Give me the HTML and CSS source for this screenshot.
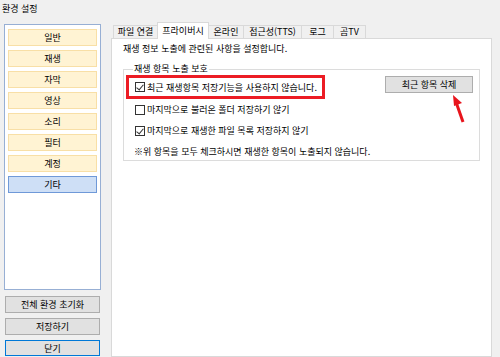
FILE: index.html
```html
<!DOCTYPE html>
<html lang="ko">
<head>
	<meta charset="UTF-8">
	<title>환경 설정</title>
	<link rel="stylesheet" href="styles.css">
</head>
<body>
	<div class="title">환경 설정</div>
	<div class="main">
		<div class="side">
			<ul class="menu">
				<li>일반</li>
				<li>재생</li>
				<li>자막</li>
				<li>영상</li>
				<li>소리</li>
				<li>필터</li>
				<li>계정</li>
				<li class="cur">기타</li>
			</ul>
			<a href="javascript:;" class="btn">전체 환경 초기화</a>
			<a href="javascript:;" class="btn">저장하기</a>
			<a href="javascript:;" class="btn def">닫기</a>
		</div>
		<div class="content">
			<div class="tabs">
				<span class="tab t1">파일 연결</span>
				<span class="tab t2 cur">프라이버시</span>
				<span class="tab t3">온라인</span>
				<span class="tab t4">접근성(TTS)</span>
				<span class="tab t5">로그</span>
				<span class="tab t6">곰TV</span>
			</div>
			<div class="panel">
				<p class="desc">재생 정보 노출에 관련된 사항을 설정합니다.</p>
				<fieldset class="group">
					<legend>재생 항목 노출 보호</legend>
					<div class="group_in">
						<div class="opts">
							<div class="opt mark"><i class="chk on"></i>최근 재생항목 저장기능을 사용하지 않습니다.</div>
							<div class="opt"><i class="chk"></i>마지막으로 불러온 폴더 저장하기 않기</div>
							<div class="opt"><i class="chk on"></i>마지막으로 재생한 파일 목록 저장하지 않기</div>
							<div class="note">※위 항목을 모두 체크하시면 재생한 항목이 노출되지 않습니다.</div>
						</div>
						<a href="javascript:;" class="btn del">최근 항목 삭제</a>
					</div>
					<!-- 빨간 화살표 -->
					<svg class="arrow" width="20" height="30" viewBox="0 0 20 30">
						<path d="M12 27 L5 7" stroke="#e8141c" stroke-width="3" fill="none"/>
						<path d="M2 0 L11 8 L3 11 Z" fill="#e8141c"/>
					</svg>
				</fieldset>
			</div>
		</div>
	</div>
</body>
</html>
```

FILE: styles.css
```css
*{
	margin: 0;
	padding: 0;
	box-sizing: border-box;
}
body{
	width: 500px;
	height: 357px;
	overflow: hidden;
	background-color: #f0f0f0;
	font-family: "Noto Sans CJK KR", sans-serif;
	font-size: 9px;
	color: #000;
}
.title{
	height: 22px;
	padding: 2px 0 0 2px;
	line-height: 13px;
}
.main{
	display: flex;
	padding: 0 8px 0 4px;
	height: 335px;
}
.side{
	width: 97px;
	padding-top: 2px;
	display: flex;
	flex-direction: column;
}
.menu{
	list-style: none;
	flex-shrink: 0;
	height: 266px;
	border: 1px solid #97afd4;
	background-color: #fff;
	padding: 4px 3px;
	margin-bottom: 6px;
}
.menu li{
	height: 17px;
	line-height: 15px;
	margin-bottom: 4px;
	text-align: center;
	background-color: #fff3d3;
	border: 1px solid #f8dfa6;
}
.menu li.cur{
	background-color: #cedff6;
	border-color: #6f99d8;
}
.btn{
	display: block;
	flex-shrink: 0;
	height: 17px;
	line-height: 15px;
	text-align: center;
	color: #000;
	text-decoration: none;
	background-color: #e1e1e1;
	border: 1px solid #adadad;
}
.side .btn{
	width: 95px;
	margin: 0 0 5px 1px;
}
.side .btn.def{
	height: 16px;
	margin-bottom: 0;
	border-color: #0078d7;
}
.content{
	flex: 1;
	margin-left: 10px;
	display: flex;
	flex-direction: column;
}
.tabs{
	display: flex;
	align-items: flex-end;
	height: 16px;
	padding-left: 2px;
	position: relative;
	z-index: 1;
}
.tab{
	height: 13px;
	line-height: 12px;
	text-align: center;
	background-color: #f0f0f0;
	border: 1px solid #d9d9d9;
	border-bottom: none;
	margin-left: -1px;
}
.tab.cur{
	height: 17px;
	line-height: 15px;
	background-color: #fff;
	margin-bottom: -1px;
	z-index: 2;
}
.t1{ width: 45px; margin-left: 0; }
.t2{ width: 52px; }
.t3{ width: 36px; }
.t4{ width: 59px; }
.t5{ width: 33px; }
.t6{ width: 33px; }
.panel{
	flex: 1;
	background-color: #fff;
	border: 1px solid #d9d9d9;
	padding: 4px 11px 0 11px;
}
.desc{
	line-height: 12px;
	margin-bottom: 9px;
}
.group{
	position: relative;
	border: 1px solid #dcdcdc;
	height: 97px;
	padding: 0 6px 0 6px;
}
.group legend{
	margin-left: 3px;
	padding: 0 1px;
	line-height: 10px;
}
.group_in{
	display: flex;
	justify-content: space-between;
	align-items: flex-start;
}
.opts{
	padding-top: 1px;
}
.opt{
	display: flex;
	align-items: center;
	height: 21px;
	padding-left: 5px;
}
.opt.mark{
	width: 199px;
	height: 24px;
	margin-left: -4px;
	padding-left: 6px;
	border: 3px solid #ec1c24;
}
.chk{
	display: inline-block;
	width: 10px;
	height: 10px;
	border: 1px solid #333;
	background-color: #fff;
	margin-right: 2px;
	position: relative;
}
.chk.on::after{
	content: "";
	position: absolute;
	left: 2px;
	top: 0;
	width: 3px;
	height: 6px;
	border: solid #333;
	border-width: 0 1px 1px 0;
	transform: rotate(40deg);
}
.note{
	height: 21px;
	line-height: 21px;
	padding-left: 4px;
}
.del{
	width: 88px;
	height: 17px;
	margin-top: 2px;
}
.arrow{
	position: absolute;
	left: 327px;
	top: 21px;
}
```
